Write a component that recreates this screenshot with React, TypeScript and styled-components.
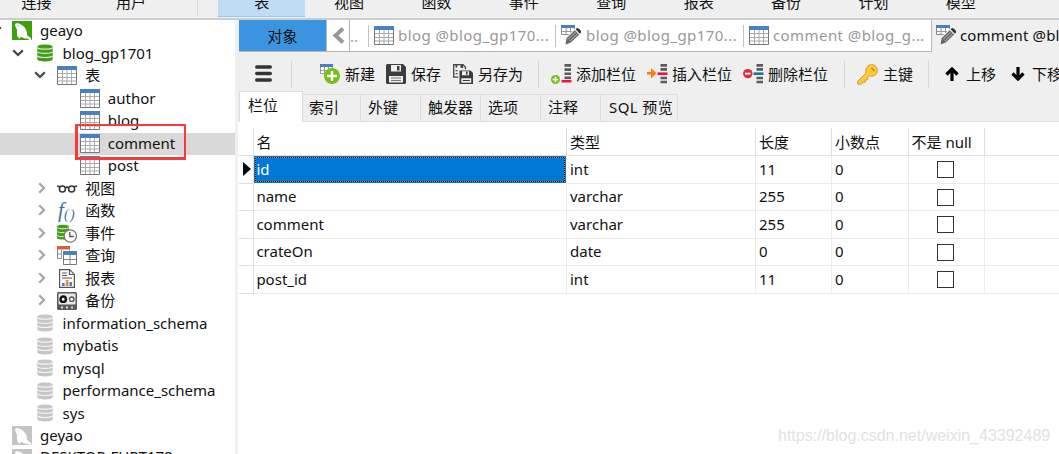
import * as React from 'react';
import styled, { createGlobalStyle } from 'styled-components';

const GlobalStyle = createGlobalStyle`
  * {
    box-sizing: border-box;
  }
  body {
    margin: 0;
    overflow: hidden;
    background: #fff;
  }
  svg {
    display: block;
    flex: none;
  }
`;

const Window = styled.div`
  width: 1059px;
  height: 454px;
  overflow: hidden;
  display: flex;
  flex-direction: column;
  font: 15px/22px 'Noto Sans', 'Noto Sans CJK SC', sans-serif;
  color: #111;
  white-space: nowrap;
  background: #fff;
`;

/* ---------- ribbon ---------- */

const Ribbon = styled.div`
  flex: none;
  height: 20px;
  display: flex;
  align-items: flex-start;
  background: #efefef;
  border-bottom: 2px solid #cdcdcd;
`;

const RibbonItem = styled.div<{ $width?: number; $active?: boolean }>`
  flex: none;
  width: ${p => p.$width || 87.4}px;
  height: 17px;
  display: flex;
  justify-content: center;
  background: ${p => (p.$active ? '#c0dcf3' : 'transparent')};
  border-bottom: 1px solid ${p => (p.$active ? '#90c8f6' : 'transparent')};

  span {
    margin-top: -9px;
  }
`;

const RibbonRule = styled.div`
  width: 1px;
  height: 16px;
  margin: 0 20px 0 8px;
  background: #dadada;
`;

const Body = styled.div`
  flex: 1;
  min-height: 0;
  display: flex;
`;

/* ---------- tree ---------- */

const Tree = styled.div`
  flex: none;
  width: 238px;
  overflow: hidden;
  border-right: 3px solid #f0f0f0;
`;

const Twisty = styled.div<{ $level: number }>`
  flex: none;
  width: ${p => p.$level * 22.6 + 12}px;
  display: flex;
  justify-content: flex-end;
  padding-right: ${p => (p.$level ? 11 : 10)}px;
  padding-bottom: 2px;
`;

const TreeIcon = styled.div`
  flex: none;
  width: 20px;
  display: flex;
  justify-content: center;
  padding-bottom: 1px;
`;

const TreeLabel = styled.span`
  margin-left: 8px;
  padding-bottom: 2px;
`;

const TreeRow = styled.div<{ $selected?: boolean }>`
  position: relative;
  height: 22.5px;
  display: flex;
  align-items: center;
  background: ${p => (p.$selected ? '#d9d9d9' : 'transparent')};

  &:last-child ${TreeLabel} {
    padding-bottom: 6px;
  }
`;

const Marker = styled.div`
  position: absolute;
  z-index: 1;
  left: 75px;
  top: -9px;
  width: 111px;
  height: 36px;
  border: solid #f93a3a;
  border-width: 2px 2px 3px 3px;
`;

/* ---------- document tabs ---------- */

const Main = styled.div`
  flex: 1;
  min-width: 0;
  display: flex;
  flex-direction: column;
`;

const DocTabs = styled.div`
  flex: none;
  height: 32px;
  display: flex;
  padding-left: 1px;
  background: #efefef;
`;

const ObjectTab = styled.div`
  flex: none;
  width: 88px;
  display: flex;
  align-items: center;
  justify-content: center;
  background: #3a94df;
  border-right: 1px solid #b8b8b8;
  border-bottom: 1px solid #b8b8b8;
`;

const TabStrip = styled.div`
  flex: none;
  width: 605px;
  display: flex;
  align-items: center;
  background: #fff;
  color: #999;
  border-right: 1px solid #b4b4b4;
  border-bottom: 1px solid #b4b4b4;
`;

const ScrollBack = styled.div`
  width: 23px;
  height: 31px;
  display: flex;
  align-items: center;
  padding-left: 5px;
  border-right: 1px solid #b4b4b4;
`;

const Dots = styled.span`
  width: 18px;
`;

const DocTab = styled.div<{ $width: number }>`
  flex: none;
  width: ${p => p.$width}px;
  height: 22px;
  display: flex;
  align-items: center;
  gap: 4px;
  padding: 0 0 1px 5px;
  border-left: 1px solid #c4c4c4;
  letter-spacing: 0.42px;
`;

const CurrentTab = styled.div`
  flex: 1;
  min-width: 0;
  overflow: hidden;
  display: flex;
  align-items: center;
  gap: 3px;
  padding: 0 0 2px 4px;
  letter-spacing: 0.15px;
`;

/* ---------- toolbar ---------- */

const Toolbar = styled.div`
  flex: none;
  height: 39px;
  display: flex;
  align-items: center;
  padding: 5px 0 0 17px;
  overflow: hidden;
  background: #efefef;
`;

const Tool = styled.div<{ $width: number; $gap?: number }>`
  flex: none;
  width: ${p => p.$width}px;
  display: flex;
  align-items: center;
  gap: ${p => p.$gap || 5}px;
`;

const ToolRule = styled.div<{ $after: number }>`
  flex: none;
  width: 1px;
  height: 28px;
  margin-right: ${p => p.$after}px;
  background: #d6d6d6;
`;

/* ---------- designer tabs ---------- */

const SubTabs = styled.div`
  flex: none;
  height: 31px;
  display: flex;
  align-items: flex-end;
  padding-left: 1px;
  background: linear-gradient(#efefef 30px, #dcdcdc 30px);
`;

const SubTab = styled.div<{ $width: number; $active?: boolean }>`
  flex: none;
  width: ${p => p.$width}px;
  height: ${p => (p.$active ? 31 : 28)}px;
  padding: ${p => (p.$active ? '2px 0 0 8px' : '1px 0 0 6px')};
  background: ${p => (p.$active ? '#fff' : '#efefef')};
  border: solid #dcdcdc;
  border-width: ${p => (p.$active ? '1px 1px 0' : '1px 1px 1px 0')};

  &:nth-child(n + 3) {
    padding-left: 7px;
  }
  &:last-child {
    padding-left: 8px;
    letter-spacing: 0.4px;
  }
`;

/* ---------- grid ---------- */

const Grid = styled.div`
  padding: 6px 0 0 1px;
`;

const GridRow = styled.div<{ $header?: boolean }>`
  height: ${p => (p.$header ? 28 : 27.5)}px;
  display: grid;
  grid-template-columns: 15px 313px 189px 76px 76.5px 76.5px 1fr;
`;

const Cell = styled.div<{ $header?: boolean }>`
  min-width: 0;
  padding: ${p => (p.$header ? 2.5 : 1.5)}px 0 0 3px;
  border-right: 1px solid ${p => (p.$header ? '#dedede' : '#ebebeb')};
  border-bottom: 1px solid ${p => (p.$header ? '#dedede' : '#ebebeb')};

  &:first-child {
    padding: 6px 0 0 3.5px;
    border-color: #dedede;
  }
  &:nth-child(2) {
    padding-left: 2.4px;
  }
  &:last-child {
    border-right: 0;
  }
`;

const FocusedCell = styled(Cell)`
  && {
    padding: 1px;
  }
  background: #0078d7;
  border: 0;
  margin: 0 1px 1px 0;
  color: #fff;
`;

const FocusRing = styled.div`
  height: 100%;
  padding-left: 0.4px;
  line-height: 22px;
  border: 1px dotted #e08030;
  background: linear-gradient(#0078d7, #0078d7) padding-box, linear-gradient(#10181f, #10181f) border-box;
`;

const CheckCell = styled(Cell)`
  padding: 5px 0 0 28px;
`;

const CheckBox = styled.div`
  width: 17px;
  height: 17px;
  border: 1px solid #333;
  background: #fff;
`;

const Watermark = styled.div`
  position: absolute;
  left: 778px;
  top: 425px;
  font: 16px/22px 'Liberation Sans', sans-serif;
  color: #e2e2e2;
`;

/* ---------- icons ---------- */

const Chevron = ({ open }: { open?: boolean }) =>
  open ? (
    <svg width="12" height="8" viewBox="0 0 12 8">
      <path d="M1.2 1.2 6 6l4.8-4.8" fill="none" stroke="#444" strokeWidth="2.2" />
    </svg>
  ) : (
    <svg width="8" height="12" viewBox="0 0 8 12">
      <path d="M1.2 1.2 6 6l-4.8 4.8" fill="none" stroke="#a6a6a6" strokeWidth="2.2" />
    </svg>
  );

const Dolphin = ({ color }: { color: string }) => (
  <svg width="20" height="19" viewBox="0 0 20 19">
    <path fill={color} d="M0 0h20v19H0z" />
    <path
      fill="#fff"
      d="M3 3.400C3.600 2 6.600 1.600 8.400 3.200c3 1.400 5.400 3.800 6.200 7l.6 4 3.600 2.800.6 2h-2c-1.200-1-2.400-1.400-4-1.400-1.800-.4-3-1-4.600-1.800L7.400 18l-2-2.800c-.6-2.600-.6-4.400-.2-6.200C4.400 7.200 3.200 5.800 3 3.400z"
    />
    <circle cx="6" cy="4.800" r="0.500" fill={color} />
  </svg>
);

const Database = ({ on }: { on?: boolean }) => {
  const fill = on ? '#469a1c' : '#c6c6c6';
  const line = on ? '#d6efc8' : '#f4f4f4';
  return (
    <svg width="16" height="18" viewBox="0 0 16 18">
      <path fill={fill} d="M.3 2.700C.3-.3 15.700-.3 15.700 2.700v12.600c0 3-15.400 3-15.400 0z" />
      <path
        fill="none"
        stroke={line}
        strokeWidth="1.2"
        d="M.3 3.600c2 2 13.400 2 15.400 0M.3 7.800c2 2 13.400 2 15.400 0M.3 12c2 2 13.400 2 15.400 0"
      />
    </svg>
  );
};

const TableIcon = () => (
  <svg width="20" height="19" viewBox="0 0 20 19">
    <path fill="#fff" stroke="#777" d="M.5.5h19v18H.5z" />
    <path stroke="#aaa" d="M1 7.500h18M1 11.500h18M1 15h18M5.500 4v14M10 4v14M14.500 4v14" />
    <path fill="#4a80bd" d="M0 0h20v4H0z" />
  </svg>
);

const DesignIcon = () => (
  <svg width="21" height="20" viewBox="0 0 21 20">
    <path fill="#fff" stroke="#888" d="M.5.5h13v9H.5z" />
    <path stroke="#999" d="M1 6.500h12M5 3v7M9.500 3v7" />
    <path fill="#4a80bd" d="M0 0h14v3H0z" />
    <path fill="#efefef" d="m4 13 10.500-10 6 5L9 19.500l-5.500.5z" />
    <path fill="#666" d="m5.600 13.200 8.200-8 4.400 4.200-8.400 8.200-5.200 2zM14.800 4.300l1.200-1c1.200-.6 4.400 2.400 3.900 3.900l-1 1.200z" />
    <path stroke="#c8c8c8" strokeWidth="0.9" d="m7.200 14.400 8-8M9 16.200l8-8" />
    <path fill="#333" d="m14.800 4.300 1.200-1c1.200-.6 4.400 2.400 3.900 3.900l-1 1.200z" />
  </svg>
);

const Glasses = () => (
  <svg width="20" height="9" viewBox="0 0 20 9">
    <g fill="none" stroke="#333" strokeWidth="1.5">
      <circle cx="5.4" cy="5" r="3" />
      <circle cx="14.6" cy="5" r="3" />
      <path d="M8.200 4c1-1 2.600-1 3.600 0M0 2l3 .8M20 2l-3 .8" />
    </g>
  </svg>
);

const FunctionGlyph = styled.span`
  font: italic 21px/20px 'Liberation Serif', serif;
  color: #3f6d9e;

  small {
    font-size: 14px;
    letter-spacing: 1.5px;
    vertical-align: -2px;
    line-height: 1;
  }
`;

const EventIcon = () => (
  <svg width="20" height="19" viewBox="0 0 20 19">
    <path fill="#469a1c" d="M0 2.500C0 0 12 0 12 2.500V14c0 2-12 2-12 0z" />
    <path fill="none" stroke="#d6efc8" d="M0 3.600c2 1.600 10 1.600 12 0M0 7.500c2 1.600 10 1.600 12 0M0 11.500c2 1.600 8 1.600 10 0" />
    <circle cx="13.3" cy="12" r="6.2" fill="#fff" stroke="#777" strokeWidth="1.3" />
    <path fill="none" stroke="#555" strokeWidth="1.3" d="M12.800 8v4.500h4" />
  </svg>
);

const QueryIcon = () => (
  <svg width="20" height="19" viewBox="0 0 20 19">
    <path fill="#fff" stroke="#888" d="M.5.5h12v12H.5z" />
    <path stroke="#999" d="M4.500 4v9M1 8h6" />
    <path fill="#d9603f" d="M0 0h13v3.500H0z" />
    <path fill="#fff" d="M5 4.500h15v14.500H5z" />
    <path fill="#fff" stroke="#777" d="M6.500 5.500h13v13h-13z" />
    <path stroke="#888" d="M13 9v9.500M7 13.500h12" />
    <path fill="#4a80bd" d="M6 5h14v4H6z" />
  </svg>
);

const ReportIcon = () => (
  <svg width="16" height="19" viewBox="0 0 16 19">
    <path fill="#fff" stroke="#555" strokeWidth="1.2" d="M.6.6h10l4.800 4.800v13H.6z" />
    <path fill="none" stroke="#555" strokeWidth="1.2" d="M10.500 1v4.500H15M3 4h5M3 6.500h5M3 9h10" />
    <path fill="#4a80bd" d="M3 14h2.600v3H3zM10.500 13h2.600v4h-2.600z" />
    <path fill="#ee8a35" d="M6.700 11h2.800v6H6.700z" />
  </svg>
);

const BackupIcon = () => (
  <svg width="20" height="18" viewBox="0 0 20 18">
    <rect width="20" height="18" rx="1.5" fill="#5a5a5a" />
    <rect x="1.5" y="1.5" width="17" height="11" rx="1" fill="#e8e8e8" />
    <circle cx="6.2" cy="7.2" r="2.7" fill="#fff" stroke="#111" strokeWidth="2.4" />
    <circle cx="14.8" cy="7.2" r="2.2" fill="#fff" stroke="#555" strokeWidth="1.3" />
    <path fill="#ddd" d="M4 14.500h2v2H4zM9 14.500h2v2H9zM14 14.500h2v2h-2z" />
  </svg>
);

const BackArrow = () => (
  <svg width="13" height="17" viewBox="0 0 13 17">
    <path d="M11 1.500 3.500 8.500l7.500 7" fill="none" stroke="#999" strokeWidth="4" />
  </svg>
);

const MenuIcon = () => (
  <svg width="17" height="19" viewBox="0 0 17 19">
    <path d="M1.700 2h13.600M1.700 8.500h13.600M1.700 15h13.600" stroke="#333" strokeWidth="3.4" strokeLinecap="round" />
  </svg>
);

const NewIcon = () => (
  <svg width="20" height="20" viewBox="0 0 20 20">
    <path fill="#fff" stroke="#999" d="M.5.5h12v9H.5z" />
    <path stroke="#999" d="M1 6.500h12M4.500 3v7M8.500 3v7" />
    <path fill="#4a80bd" d="M0 0h13v3H0z" />
    <circle cx="12" cy="12" r="8" fill="#73c016" />
    <path stroke="#fff" strokeWidth="2.4" d="M12 7v10M7 12h10" />
  </svg>
);

const SaveIcon = () => (
  <svg width="20" height="20" viewBox="0 0 20 20">
    <path fill="#3c3c3c" d="M1.500 0H17l3 3v15.500a1.500 1.500 0 0 1-1.500 1.500h-17A1.500 1.500 0 0 1 0 18.500v-17A1.500 1.500 0 0 1 1.500 0z" />
    <path fill="#efefef" d="M5 1h10v6.500H5zM3 12h14v6.500H3z" />
    <path fill="#3c3c3c" d="M11 2h2.500v4.500H11z" />
    <path stroke="#777" d="M5 14h10M5 16.500h10" />
  </svg>
);

const SaveAsIcon = () => (
  <svg width="20" height="20" viewBox="0 0 20 20">
    <path fill="#efefef" stroke="#444" strokeWidth="1.3" d="M.7.7H10l2.500 2.500v10H.7z" />
    <path fill="#444" d="M2.500 1h1.800v2.500H2.500zM7.500 1H10v3H7.500zM2.500 6h2v1.200h-2zM2.500 9h2v1.200h-2z" />
    <path fill="#efefef" d="M5.200 5.200H20V20H5.200z" />
    <path fill="#3c3c3c" d="M6.500 6.500h11L20 9v11H6.500z" />
    <path fill="#efefef" d="M9 7.300h7v3.900H9zM8.300 14.200h9.900v4.600H8.300z" />
    <path fill="#3c3c3c" d="M13 7.500h1.600v3H13zM9.800 16h7v1h-7z" />
  </svg>
);

const AddFieldIcon = () => (
  <svg width="21" height="20" viewBox="0 0 21 20">
    <path stroke="#5b5b5b" strokeWidth="2.6" d="M13.500 1.400H20M13.500 5.600H20M13.500 9.800H20M13.500 13.800H20" />
    <path stroke="#f3123f" strokeWidth="2.6" d="M10.500 17.200h10" />
    <circle cx="4.5" cy="15.5" r="4.5" fill="#73c016" />
    <path stroke="#fff" strokeWidth="1.5" d="M4.500 12.700v5.600M1.700 15.500h5.600" />
  </svg>
);

const InsertFieldIcon = () => (
  <svg width="21" height="20" viewBox="0 0 21 20">
    <path stroke="#5b5b5b" strokeWidth="2.6" d="M13.500 1.400H20M13.500 5.400H20M13.500 14H20M13.500 18H20" />
    <path stroke="#f3123f" strokeWidth="2.6" d="M10.500 9.700h10" />
    <path fill="#ff7d0a" d="M0 8h4V4l5.500 5.200L4 14.400v-4H0z" />
  </svg>
);

const DeleteFieldIcon = () => (
  <svg width="21" height="20" viewBox="0 0 21 20">
    <path stroke="#5b5b5b" strokeWidth="2.6" d="M13.500 1.400H20M13.500 5.400H20M13.500 14H20M13.500 18H20" />
    <path stroke="#12799c" strokeWidth="2.6" d="M10.500 9.700h10" />
    <circle cx="4.8" cy="9.6" r="4.7" fill="#dc2c3a" />
    <path stroke="#fff" strokeWidth="1.8" d="M2 9.600h5.600" />
  </svg>
);

const KeyIcon = () => (
  <svg width="21" height="21" viewBox="0 0 21 21">
    <path
      fill="#ffc93c"
      stroke="#d09a20"
      d="M10 3.200C12-.4 17 .2 19 2.600c2.600 3 1.400 8-2.400 9.300-1.400.6-3 .4-4.200-.1l-1.800 1.700.2 2-2.200.4-.2 2-2.200.3L3.800 20.400.8 20l-.2-2.600L9.200 9C8.400 7 8.800 4.800 10 3.200z"
    />
    <path stroke="#b98512" strokeWidth="1.2" d="m14.500 4 3 3" />
  </svg>
);

const MoveIcon = ({ down }: { down?: boolean }) => (
  <svg width="16" height="14" viewBox="0 0 16 14">
    <path
      transform={down ? 'rotate(180 8 7)' : undefined}
      d="M8 14V3M2.500 7.500 8 2l5.500 5.500"
      fill="none"
      stroke="#000"
      strokeWidth="3.2"
    />
  </svg>
);

/* ---------- data ---------- */

const ribbonItems = ['表', '视图', '函数', '事件', '查询', '报表', '备份', '计划', '模型'];

interface Node {
  level: number;
  label: string;
  icon: React.ReactNode;
  open?: boolean;
  closed?: boolean;
  selected?: boolean;
}

const fx = (
  <FunctionGlyph>
    f<small>()</small>
  </FunctionGlyph>
);

const nodes: Node[] = [
  { level: 0, label: 'geayo', icon: <Dolphin color="#3fa00b" />, open: true },
  { level: 1, label: 'blog_gp1701', icon: <Database on={true} />, open: true },
  { level: 2, label: '表', icon: <TableIcon />, open: true },
  { level: 3, label: 'author', icon: <TableIcon /> },
  { level: 3, label: 'blog', icon: <TableIcon /> },
  { level: 3, label: 'comment', icon: <TableIcon />, selected: true },
  { level: 3, label: 'post', icon: <TableIcon /> },
  { level: 2, label: '视图', icon: <Glasses />, closed: true },
  { level: 2, label: '函数', icon: fx, closed: true },
  { level: 2, label: '事件', icon: <EventIcon />, closed: true },
  { level: 2, label: '查询', icon: <QueryIcon />, closed: true },
  { level: 2, label: '报表', icon: <ReportIcon />, closed: true },
  { level: 2, label: '备份', icon: <BackupIcon />, closed: true },
  { level: 1, label: 'information_schema', icon: <Database /> },
  { level: 1, label: 'mybatis', icon: <Database /> },
  { level: 1, label: 'mysql', icon: <Database /> },
  { level: 1, label: 'performance_schema', icon: <Database /> },
  { level: 1, label: 'sys', icon: <Database /> },
  { level: 0, label: 'geyao', icon: <Dolphin color="#c4c4c4" /> },
  { level: 0, label: 'DESKTOP-FURT178', icon: <Dolphin color="#c4c4c4" /> }
];

const fields = [
  { name: 'id', type: 'int', length: 11 },
  { name: 'name', type: 'varchar', length: 255 },
  { name: 'comment', type: 'varchar', length: 255 },
  { name: 'crateOn', type: 'date', length: 0 },
  { name: 'post_id', type: 'int', length: 11 }
];

const App = () => (
  <Window>
    <GlobalStyle />
    <Ribbon>
      <RibbonItem $width={73}>
        <span>连接</span>
      </RibbonItem>
      <RibbonItem $width={116}>
        <span>用户</span>
      </RibbonItem>
      <RibbonRule />
      {ribbonItems.map((label, i) => (
        <RibbonItem key={label} $active={i === 0}>
          <span>{label}</span>
        </RibbonItem>
      ))}
    </Ribbon>
    <Body>
      <Tree>
        {nodes.map((node, i) => (
          <TreeRow key={i} $selected={node.selected}>
            <Twisty $level={node.level}>
              {(node.open || node.closed) && <Chevron open={node.open} />}
            </Twisty>
            <TreeIcon>{node.icon}</TreeIcon>
            <TreeLabel>{node.label}</TreeLabel>
            {node.selected && <Marker />}
          </TreeRow>
        ))}
      </Tree>
      <Main>
        <DocTabs>
          <ObjectTab>对象</ObjectTab>
          <TabStrip>
            <ScrollBack>
              <BackArrow />
            </ScrollBack>
            <Dots>..</Dots>
            <DocTab $width={187}>
              <TableIcon />
              blog @blog_gp170...
            </DocTab>
            <DocTab $width={188}>
              <DesignIcon />
              blog @blog_gp170...
            </DocTab>
            <DocTab $width={187}>
              <TableIcon />
              comment @blog_g...
            </DocTab>
          </TabStrip>
          <CurrentTab>
            <DesignIcon />
            comment @blog_gp1701
          </CurrentTab>
        </DocTabs>
        <Toolbar>
          <Tool $width={36}>
            <MenuIcon />
          </Tool>
          <ToolRule $after={28} />
          <Tool $width={66}>
            <NewIcon />
            新建
          </Tool>
          <Tool $width={67}>
            <SaveIcon />
            保存
          </Tool>
          <Tool $width={85}>
            <SaveAsIcon />
            另存为
          </Tool>
          <ToolRule $after={12} />
          <Tool $width={96} $gap={4}>
            <AddFieldIcon />
            添加栏位
          </Tool>
          <Tool $width={96} $gap={4}>
            <InsertFieldIcon />
            插入栏位
          </Tool>
          <Tool $width={101} $gap={4}>
            <DeleteFieldIcon />
            删除栏位
          </Tool>
          <ToolRule $after={12} />
          <Tool $width={71}>
            <KeyIcon />
            主键
          </Tool>
          <ToolRule $after={15} />
          <Tool $width={66} $gap={6}>
            <MoveIcon />
            上移
          </Tool>
          <Tool $width={66} $gap={6}>
            <MoveIcon down={true} />
            下移
          </Tool>
        </Toolbar>
        <SubTabs>
          <SubTab $width={64} $active={true}>
            栏位
          </SubTab>
          <SubTab $width={58}>索引</SubTab>
          <SubTab $width={60}>外键</SubTab>
          <SubTab $width={60}>触发器</SubTab>
          <SubTab $width={60}>选项</SubTab>
          <SubTab $width={60}>注释</SubTab>
          <SubTab $width={77}>SQL 预览</SubTab>
        </SubTabs>
        <Grid>
          <GridRow $header={true}>
            <Cell $header={true} />
            <Cell $header={true}>名</Cell>
            <Cell $header={true}>类型</Cell>
            <Cell $header={true}>长度</Cell>
            <Cell $header={true}>小数点</Cell>
            <Cell $header={true}>不是 null</Cell>
            <Cell $header={true} />
          </GridRow>
          {fields.map((field, i) => (
            <GridRow key={field.name}>
              <Cell>
                {i === 0 && (
                  <svg width="8" height="14" viewBox="0 0 8 14">
                    <path d="M0 0v14l8-7z" />
                  </svg>
                )}
              </Cell>
              {i === 0 ? (
                <FocusedCell>
                  <FocusRing>{field.name}</FocusRing>
                </FocusedCell>
              ) : (
                <Cell>{field.name}</Cell>
              )}
              <Cell>{field.type}</Cell>
              <Cell>{field.length}</Cell>
              <Cell>0</Cell>
              <CheckCell>
                <CheckBox />
              </CheckCell>
              <Cell />
            </GridRow>
          ))}
        </Grid>
      </Main>
    </Body>
    <Watermark>https://blog.csdn.net/weixin_43392489</Watermark>
  </Window>
);

export default App;
